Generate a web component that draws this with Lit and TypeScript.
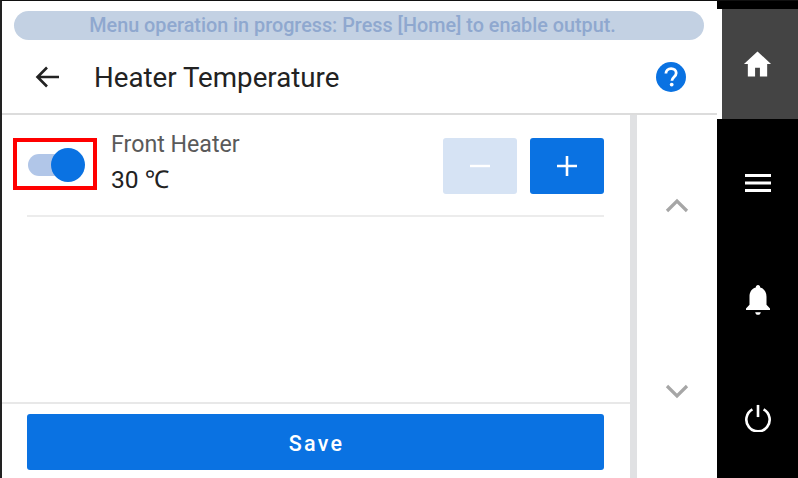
import { LitElement, html, css } from "lit";
import { customElement } from "lit/decorators.js";

@customElement("app-root")
export class AppRoot extends LitElement {
  static styles = css`
    :host { display: block; width: 798px; height: 478px; overflow: hidden; background: #fff; font-family: Roboto, "Noto Sans", sans-serif; }
    .frame { display: flex; width: 798px; height: 478px; box-sizing: border-box; border-top: 1px solid #111; border-left: 2px solid #222; }
    .main { width: 715px; height: 477px; display: flex; flex-direction: column; background: #fff; flex: none; }
    .banner-wrap { height: 40px; padding: 10px 13px 0 12px; box-sizing: border-box; flex: none; }
    .banner { height: 29px; width: 690px; border-radius: 15px; background: #c3d1e3; color: #8fa8cf; font-size: 19.8px; font-weight: 500; display: flex; align-items: center; justify-content: center; white-space: nowrap; padding-right: 13px; box-sizing: border-box; }
    .header { height: 74px; flex: none; box-sizing: border-box; border-bottom: 2px solid #dcdcdc; display: flex; align-items: center; padding: 0 30px 0 32px; }
    .back { width: 28px; height: 28px; flex: none; display: block; }
    .title { margin-left: 32px; font-size: 27.7px; color: #222; flex: 1; line-height: 34px; margin-top: 2px; }
    .help { width: 32px; height: 32px; flex: none; display: block; }
    .body { flex: 1; display: flex; min-height: 0; }
    .left { width: 628px; flex: none; display: flex; flex-direction: column; }
    .list { flex: 1; padding: 23px 26px 0 25px; }
    .row { display: flex; height: 79px; box-sizing: border-box; border-bottom: 2px solid #ececec; position: relative; }
    .marker { position: absolute; left: -14px; top: 0; width: 84px; height: 52px; box-sizing: border-box; border: 4px solid #f00; }
    .toggle { width: 84px; margin-left: -14px; height: 52px; flex: none; position: relative; }
    .track { position: absolute; left: 15px; top: 16px; width: 42px; height: 22px; border-radius: 11px; background: #b1c6e8; }
    .knob { position: absolute; left: 38px; top: 10px; width: 34px; height: 34px; border-radius: 50%; background: #0a72e2; }
    .labels { margin-left: 14px; flex: 1; }
    .name { font-size: 23.2px; color: #5a5a5a; line-height: 24px; margin-top: -6px; }
    .value { font-size: 24.6px; color: #222; line-height: 30px; margin-top: 9px; }
    .btns { display: flex; gap: 13px; }
    .btn { width: 74px; height: 56px; border-radius: 3px; background: #0a72e2; display: flex; align-items: center; justify-content: center; }
    .btn.off { background: #d6e3f4; }
    .btn svg { width: 24px; height: 24px; display: block; }
    .footer { height: 76px; flex: none; box-sizing: border-box; border-top: 2px solid #e8e8e8; padding: 10px 26px 0 25px; }
    .save { height: 56px; box-sizing: border-box; padding: 3px 0 0 2px; border-radius: 3px; background: #0a72e2; color: #fff; font-size: 21.5px; font-weight: 500; letter-spacing: 2.2px; display: flex; align-items: center; justify-content: center; }
    .scrollbar { width: 7px; flex: none; background: #e0e1e3; }
    .arrows { flex: 1; display: flex; flex-direction: column; align-items: center; padding-top: 79px; gap: 161px; }
    .arrows svg { width: 24px; height: 24px; display: block; }
    .side-wrap { width: 81px; flex: none; display: flex; flex-direction: column; background: #000; padding-top: 8px; box-sizing: border-box; }
    .home-row { background: #fff; flex: none; }
    .cell { flex: none; display: flex; align-items: center; justify-content: center; }
    .cell svg { display: block; }
    .home { background: #444; margin-left: 5px; height: 110px; }
    .home svg { margin-right: 5px; margin-top: -1px; }
    .menu { height: 127px; }
    .bell { height: 110px; }
    .power { height: 124px; }
  `;

  render() {
    return html`
      <div class="frame">
        <div class="main">
          <div class="banner-wrap"><div class="banner">Menu operation in progress: Press [Home] to enable output.</div></div>
          <div class="header">
            <svg class="back" viewBox="0 0 28 28"><path d="M25 14H4M13 4.500 3.500 14l9.500 9.500" fill="none" stroke="#222" stroke-width="2.600"/></svg>
            <div class="title">Heater Temperature</div>
            <svg class="help" viewBox="0 0 32 32"><circle cx="16" cy="16" r="15" fill="#0a72e2"/><path d="M10.900 12.600c0-3 2.200-5 5.200-5s5.100 1.900 5.100 4.500c0 3.900-4.300 3.900-4.300 7.700" fill="none" stroke="#fff" stroke-width="2.800"/><circle cx="16.700" cy="23.600" r="1.900" fill="#fff"/></svg>
          </div>
          <div class="body">
            <div class="left">
              <div class="list">
                <div class="row">
                  <div class="toggle"><div class="track"></div><div class="knob"></div></div>
                  <div class="marker"></div>
                  <div class="labels"><div class="name">Front Heater</div><div class="value">30 ℃</div></div>
                  <div class="btns">
                    <div class="btn off"><svg viewBox="0 0 24 24"><path d="M2 12h20" stroke="#fff" stroke-width="2.400"/></svg></div>
                    <div class="btn"><svg viewBox="0 0 24 24"><path d="M2 12h20M12 2v20" stroke="#fff" stroke-width="2.600"/></svg></div>
                  </div>
                </div>
              </div>
              <div class="footer"><div class="save">Save</div></div>
            </div>
            <div class="scrollbar"></div>
            <div class="arrows">
              <svg viewBox="0 0 24 24"><path d="M2 17 12 7l10 10" fill="none" stroke="#a6a6a6" stroke-width="3.200"/></svg>
              <svg viewBox="0 0 24 24"><path d="M2 7l10 10L22 7" fill="none" stroke="#a6a6a6" stroke-width="3.200"/></svg>
            </div>
          </div>
        </div>
        <div class="side-wrap">
          <div class="home-row"><div class="cell home">
            <svg width="29" height="28" viewBox="0 0 30 28"><path d="M15 1 1 14h4v13h7.500v-9h5v9H25V14h4z" fill="#fff"/></svg>
          </div></div>
          <div class="cell menu">
            <svg width="28" height="20" viewBox="0 0 28 20"><path d="M1 2.500h26M1 10h26M1 17.500h26" stroke="#fff" stroke-width="2.800"/></svg>
          </div>
          <div class="cell bell">
            <svg width="26" height="34" viewBox="0 0 26 32" preserveAspectRatio="none"><path d="M13 1c1.300 0 2.200 1 2.200 2.300 4.300 1 6.300 4.500 6.300 8.700v7.500L25 23v1.500H1V23l3.500-3.500V12c0-4.200 2-7.700 6.300-8.700C10.800 2 11.700 1 13 1zM10.200 26.500h5.600C15.600 28 14.500 29 13 29s-2.600-1-2.800-2.500z" fill="#fff"/></svg>
          </div>
          <div class="cell power">
            <svg width="28" height="28" viewBox="0 0 30 30"><path d="M9 5.800a12.500 12.500 0 1 0 12 0" fill="none" stroke="#fff" stroke-width="2.800"/><path d="M15 1v13" stroke="#fff" stroke-width="2.800"/></svg>
          </div>
        </div>
      </div>
    `;
  }
}
